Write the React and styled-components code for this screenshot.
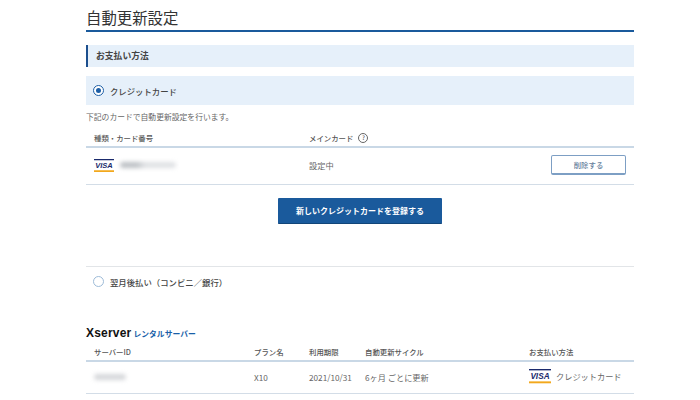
import React from "react";
import styled, { createGlobalStyle } from "styled-components";

const Global = createGlobalStyle`
  html, body { margin: 0; padding: 0; background: #fff; overflow: hidden; }
  body {
    font-family: "Noto Sans CJK JP", "Noto Sans", sans-serif;
    color: #555;
  }
`;

const Page = styled.div`
  width: 548px;
  height: 400px;
  margin-left: 86px;
  display: flex;
  flex-direction: column;
`;

const Title = styled.h1`
  margin: 0;
  height: 32px;
  box-sizing: border-box;
  padding-top: 5px;
  font-size: 15.4px;
  line-height: 24px;
  font-weight: 400;
  color: #333;
  border-bottom: 2px solid #1a5a9c;
`;

const SectionBar = styled.div`
  margin-top: 13px;
  height: 22px;
  box-sizing: border-box;
  border-left: 2px solid #1c4f8e;
  background: #e6f0fa;
  padding-left: 8px;
  font-size: 8.8px;
  line-height: 21px;
  font-weight: 700;
  color: #444;
`;

const RadioRow = styled.div`
  display: flex;
  align-items: center;
  gap: 6px;
  height: 29px;
  padding-left: 7px;
  font-size: 8.4px;
  line-height: 10px;
  font-weight: 500;
  color: #444;
  background: ${(p) => (p.$active ? "#e6f0fa" : "transparent")};
  margin-top: ${(p) => (p.$active ? "9px" : "0")};
`;

const Radio = styled.span`
  width: 11px;
  height: 11px;
  border-radius: 50%;
  box-sizing: border-box;
  border: 1.5px solid ${(p) => (p.$on ? "#1c5ea6" : "#9dbbd8")};
  background: #fff;
  display: flex;
  align-items: center;
  justify-content: center;
  &::after {
    content: "";
    display: ${(p) => (p.$on ? "block" : "none")};
    width: 5.5px;
    height: 5.5px;
    border-radius: 50%;
    background: #1c5ea6;
  }
`;

const Note = styled.p`
  margin: 6px 0 0;
  font-size: 7.8px;
  line-height: 12px;
  color: #666;
`;

const Row = styled.div`
  display: grid;
  grid-template-columns: ${(p) => p.$cols};
  align-items: center;
  height: ${(p) => p.$h}px;
  box-sizing: border-box;
  padding-left: 8px;
  padding-top: ${(p) => p.$pad || 0}px;
  padding-bottom: ${(p) => (p.$head ? 0 : 2)}px;
  border-bottom: ${(p) => (p.$head ? "2px solid #c9d8e6" : "1.5px solid #d3dde7")};
  font-size: ${(p) => (p.$head ? "7.4px" : "8.2px")};
  color: ${(p) => (p.$head ? "#555" : "#666")};
  font-weight: ${(p) => (p.$head ? 500 : 400)};
`;

const Cell = styled.div`
  display: flex;
  align-items: center;
  gap: ${(p) => p.$gap || 0}px;
  white-space: nowrap;
`;

const Blur = styled.span`
  display: block;
  width: ${(p) => p.$w}px;
  height: 6px;
  border-radius: 3px;
  background: ${(p) => (p.$fade ? "linear-gradient(90deg, #bcc0c4 0 30%, #dfe1e4 45% 100%)" : "#d5d7da")};
  filter: blur(2px);
`;

const Help = styled.span`
  width: 8px;
  height: 8px;
  margin-left: 5px;
  border-radius: 50%;
  border: 1px solid #666;
  font-size: 6px;
  line-height: 8px;
  text-align: center;
  color: #555;
`;

const GhostButton = styled.button`
  justify-self: end;
  margin-right: 8px;
  width: 75px;
  height: 20px;
  padding: 0;
  background: #fff;
  border: 1px solid #7d9fc4;
  border-bottom-width: 2px;
  border-radius: 2px;
  font: 500 7.4px "Noto Sans CJK JP", sans-serif;
  color: #66809c;
`;

const Center = styled.div`
  display: flex;
  justify-content: center;
  margin-top: 13px;
  padding-bottom: 42px;
  border-bottom: 1.5px solid #e2e5e8;
`;

const MainButton = styled.button`
  width: 164px;
  height: 26px;
  padding: 0;
  background: #1a5a9c;
  border: none;
  border-bottom: 1px solid #124578;
  border-radius: 1px;
  font: 700 8px "Noto Sans CJK JP", sans-serif;
  color: #fff;
`;

const Brand = styled.div`
  display: flex;
  align-items: baseline;
  gap: 2px;
  margin-top: 30px;
  height: 14px;
  line-height: 14px;
`;

const BrandName = styled.span`
  font: 700 12px/14px "Liberation Sans", sans-serif;
  letter-spacing: 0.2px;
  color: #111;
`;

const BrandSub = styled.span`
  font-size: 7.8px;
  font-weight: 700;
  color: #1a5fa8;
`;

const Visa = ({ w = 20 }) => (
  <svg width={w} height={w * 0.65} viewBox="0 0 40 26">
    <rect width="40" height="26" fill="#fff" />
    <rect width="40" height="2.5" fill="#1a2a6c" />
    <rect y="22.5" width="40" height="3.5" fill="#f2a81d" />
    <text x="20" y="18" textAnchor="middle" fontFamily="Liberation Sans" fontWeight="700" fontStyle="italic" fontSize="15" fill="#1a2a6c">VISA</text>
  </svg>
);

const cardCols = "215px 1fr 90px";
const serverCols = "160px 55px 56px 164px 1fr";

export default function App() {
  return (
    <>
      <Global />
      <Page>
        <Title>自動更新設定</Title>
        <SectionBar>お支払い方法</SectionBar>
        <RadioRow $active>
          <Radio $on />
          クレジットカード
        </RadioRow>
        <Note>下記のカードで自動更新設定を行います。</Note>
        <Row $head $cols={cardCols} $h={25} $pad={6}>
          <Cell>種類・カード番号</Cell>
          <Cell>メインカード<Help>?</Help></Cell>
          <Cell />
        </Row>
        <Row $cols={cardCols} $h={37}>
          <Cell $gap={6}>
            <Visa />
            <Blur $w={56} $fade />
          </Cell>
          <Cell>設定中</Cell>
          <GhostButton>削除する</GhostButton>
        </Row>
        <Center>
          <MainButton>新しいクレジットカードを登録する</MainButton>
        </Center>
        <RadioRow>
          <Radio />
          翌月後払い（コンビニ／銀行）
        </RadioRow>
        <Brand>
          <BrandName>Xserver</BrandName>
          <BrandSub>レンタルサーバー</BrandSub>
        </Brand>
        <Row $head $cols={serverCols} $h={22} $pad={3}>
          <Cell>サーバーID</Cell>
          <Cell>プラン名</Cell>
          <Cell>利用期限</Cell>
          <Cell>自動更新サイクル</Cell>
          <Cell>お支払い方法</Cell>
        </Row>
        <Row $cols={serverCols} $h={32}>
          <Cell><Blur $w={32} /></Cell>
          <Cell>X10</Cell>
          <Cell>2021/10/31</Cell>
          <Cell>6ヶ月 ごとに更新</Cell>
          <Cell $gap={5}><Visa w={22} />クレジットカード</Cell>
        </Row>
      </Page>
    </>
  );
}
